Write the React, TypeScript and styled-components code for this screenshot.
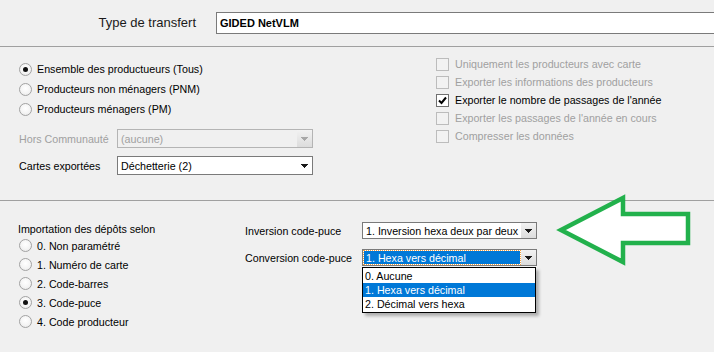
import React from "react";
import styled, { createGlobalStyle } from "styled-components";

const GlobalStyle = createGlobalStyle`
  html, body { margin: 0; padding: 0; background: #f0f0f0; }
  * { box-sizing: border-box; }
`;

const Window = styled.div`
  position: relative;
  width: 714px;
  height: 352px;
  overflow: hidden;
  background: #f0f0f0;
  font-family: "Liberation Sans", Arial, sans-serif;
  font-size: 10.7px;
  color: #000;
`;

const Header = styled.div`
  display: flex;
  align-items: flex-start;
  height: 46px;
  padding-top: 12px;
`;

const HeaderLabel = styled.div`
  width: 196px;
  text-align: right;
  font-size: 13px;
  line-height: 22px;
  color: #1a1a1a;
`;

const TextField = styled.div`
  flex: 1;
  margin-left: 20px;
  height: 22px;
  border: 1px solid #7a7a7a;
  border-right: none;
  background: #fff;
  padding-left: 3px;
  font-weight: bold;
  font-size: 11px;
  line-height: 20px;
`;

const Divider = styled.div`
  height: 1px;
  background: #a0a0a0;
`;

const Middle = styled.div`
  display: flex;
  height: 153px;
`;

const LeftCol = styled.div`
  width: 436px;
  padding: 12px 0 0 19px;
`;

const RightCol = styled.div`
  flex: 1;
  padding-top: 8px;
`;

const RadioRow = styled.div<{ $h: number }>`
  display: flex;
  align-items: center;
  gap: 5px;
  height: ${(p) => p.$h}px;
`;

const RadioCircle = styled.span<{ $on?: boolean }>`
  position: relative;
  width: 13px;
  height: 13px;
  border-radius: 50%;
  border: 1px solid #a2a2a2;
  background: radial-gradient(circle at 50% 40%, #ffffff 0%, #f4f4f4 55%, #e4e4e4 100%);
  flex: none;
  display: flex;
  align-items: center;
  justify-content: center;
  &::after {
    content: "";
    display: ${(p) => (p.$on ? "block" : "none")};
    width: 5px;
    height: 5px;
    border-radius: 50%;
    background: #111;
  }
`;

const FieldRow = styled.div<{ $mt: number }>`
  display: grid;
  grid-template-columns: 98px 196px;
  align-items: center;
  margin-top: ${(p) => p.$mt}px;
`;

const FieldLabel = styled.span<{ $disabled?: boolean }>`
  color: ${(p) => (p.$disabled ? "#a0a0a0" : "#000")};
`;

const ComboBox = styled.div<{ $disabled?: boolean; $h: number }>`
  position: relative;
  display: flex;
  height: ${(p) => p.$h}px;
  border: 1px solid ${(p) => (p.$disabled ? "#b4b4b4" : "#7a7a7a")};
  background: ${(p) => (p.$disabled ? "#f0f0f0" : "#fff")};
  color: ${(p) => (p.$disabled ? "#a0a0a0" : "#000")};
`;

const ComboText = styled.div`
  flex: 1;
  display: flex;
  align-items: center;
  padding-left: 3px;
  white-space: nowrap;
  overflow: hidden;
`;

const ComboFocus = styled.div`
  flex: 1;
  display: flex;
  align-items: center;
  margin: 1px 1px 1px 1px;
  padding-left: 2px;
  background: #0078d7;
  color: #fff;
  outline: 1px dotted #f5a040;
  outline-offset: 0;
  white-space: nowrap;
  overflow: hidden;
`;

const ComboButton = styled.div<{ $shade?: boolean }>`
  width: 15px;
  flex: none;
  display: flex;
  align-items: center;
  justify-content: center;
  background: ${(p) => (p.$shade ? "linear-gradient(#f2f2f2, #dcdcdc)" : "transparent")};
`;

const CheckRow = styled.div<{ $disabled?: boolean }>`
  display: flex;
  align-items: center;
  gap: 6px;
  height: 18px;
  color: ${(p) => (p.$disabled ? "#a0a0a0" : "#000")};
`;

const CheckBox = styled.span<{ $disabled?: boolean }>`
  width: 13px;
  height: 13px;
  flex: none;
  border: 1px solid ${(p) => (p.$disabled ? "#bcbcbc" : "#707070")};
  background: ${(p) => (p.$disabled ? "#f2f2f2" : "#fff")};
  display: flex;
  align-items: center;
  justify-content: center;
`;

const Bottom = styled.div`
  display: flex;
  height: 151px;
`;

const BottomLeft = styled.div`
  width: 245px;
  padding: 21px 0 0 18px;
`;

const GroupTitle = styled.div`
  line-height: 14px;
  height: 14px;
`;

const RadioList = styled.div`
  padding-left: 1px;
`;

const BottomRight = styled.div`
  display: grid;
  grid-template-columns: 117px 175px;
  grid-auto-rows: 17px;
  row-gap: 10px;
  align-items: center;
  padding-top: 21px;
  align-content: start;
`;

const DropList = styled.div`
  position: absolute;
  left: -1px;
  top: 17px;
  width: 174px;
  border: 1px solid #000;
  background: #fff;
  color: #000;
  padding: 1px 0;
  box-shadow: 3px 3px 3px rgba(0, 0, 0, 0.28);
  z-index: 5;
`;

const DropItem = styled.div<{ $sel?: boolean }>`
  height: 14px;
  line-height: 14px;
  padding-left: 2px;
  background: ${(p) => (p.$sel ? "#0078d7" : "#fff")};
  color: ${(p) => (p.$sel ? "#fff" : "#000")};
  white-space: nowrap;
`;

const ArrowMark = styled.svg`
  position: absolute;
  left: 550px;
  top: 190px;
`;

const Tri = ({ color }: { color: string }) => (
  <svg width="7" height="4" viewBox="0 0 7 4" shapeRendering="crispEdges">
    <path d="M0 0h7v1H0zM1 1h5v1H1zM2 2h3v1H2zM3 3h1v1H3z" fill={color} />
  </svg>
);

const Check = () => (
  <svg width="9" height="9" viewBox="0 0 9 9">
    <path d="M1 4.5 L3.5 7 L8 1.5" fill="none" stroke="#000" strokeWidth="2" />
  </svg>
);

const Radio = ({ label, on, h }: { label: string; on?: boolean; h: number }) => (
  <RadioRow $h={h}>
    <RadioCircle $on={on} />
    <span>{label}</span>
  </RadioRow>
);

const Check2 = ({ label, on, disabled }: { label: string; on?: boolean; disabled?: boolean }) => (
  <CheckRow $disabled={disabled}>
    <CheckBox $disabled={disabled}>{on && <Check />}</CheckBox>
    <span>{label}</span>
  </CheckRow>
);

export default function App() {
  return (
    <Window>
      <GlobalStyle />
      <Header>
        <HeaderLabel>Type de transfert</HeaderLabel>
        <TextField>GIDED NetVLM</TextField>
      </Header>
      <Divider />
      <Middle>
        <LeftCol>
          <Radio h={20} on label="Ensemble des productueurs (Tous)" />
          <Radio h={20} label="Producteurs non ménagers (PNM)" />
          <Radio h={20} label="Producteurs ménagers (PM)" />
          <FieldRow $mt={10}>
            <FieldLabel $disabled>Hors Communauté</FieldLabel>
            <ComboBox $disabled $h={19}>
              <ComboText>(aucune)</ComboText>
              <ComboButton $shade>
                <Tri color="#a8a8a8" />
              </ComboButton>
            </ComboBox>
          </FieldRow>
          <FieldRow $mt={8}>
            <FieldLabel>Cartes exportées</FieldLabel>
            <ComboBox $h={19}>
              <ComboText>Déchetterie (2)</ComboText>
              <ComboButton>
                <Tri color="#1a1a1a" />
              </ComboButton>
            </ComboBox>
          </FieldRow>
        </LeftCol>
        <RightCol>
          <Check2 disabled label="Uniquement les producteurs avec carte" />
          <Check2 disabled label="Exporter les informations des producteurs" />
          <Check2 on label="Exporter le nombre de passages de l'année" />
          <Check2 disabled label="Exporter les passages de l'année en cours" />
          <Check2 disabled label="Compresser les données" />
        </RightCol>
      </Middle>
      <Divider />
      <Bottom>
        <BottomLeft>
          <GroupTitle>Importation des dépôts selon</GroupTitle>
          <RadioList>
            <Radio h={19} label="0. Non paramétré" />
            <Radio h={19} label="1. Numéro de carte" />
            <Radio h={19} label="2. Code-barres" />
            <Radio h={19} on label="3. Code-puce" />
            <Radio h={19} label="4. Code producteur" />
          </RadioList>
        </BottomLeft>
        <BottomRight>
          <FieldLabel>Inversion code-puce</FieldLabel>
          <ComboBox $h={17}>
            <ComboText>1. Inversion hexa deux par deux</ComboText>
            <ComboButton $shade>
              <Tri color="#1a1a1a" />
            </ComboButton>
          </ComboBox>
          <FieldLabel>Conversion code-puce</FieldLabel>
          <ComboBox $h={17}>
            <ComboFocus>1. Hexa vers décimal</ComboFocus>
            <ComboButton $shade>
              <Tri color="#1a1a1a" />
            </ComboButton>
            <DropList>
              <DropItem>0. Aucune</DropItem>
              <DropItem $sel>1. Hexa vers décimal</DropItem>
              <DropItem>2. Décimal vers hexa</DropItem>
            </DropList>
          </ComboBox>
        </BottomRight>
      </Bottom>
      <ArrowMark width="150" height="80" viewBox="0 0 150 80">
        <polygon
          points="11,40 73,8 73,24 138,24 138,53 73,53 73,72"
          fill="#fff"
          stroke="#22b14c"
          strokeWidth="4.5"
          strokeLinejoin="miter"
        />
      </ArrowMark>
    </Window>
  );
}
